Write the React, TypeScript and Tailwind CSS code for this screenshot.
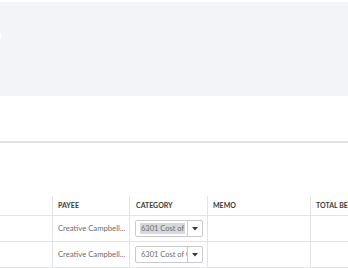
const rows = ["Creative Campbell...", "Creative Campbell..."];

function Arrow() {
  return (
    <svg width="6" height="4" viewBox="0 0 6 4">
      <path d="M0 0 H6 L3 3.5 Z" fill="#393a3d" />
    </svg>
  );
}

function CategorySelect({ selected }: { selected: boolean }) {
  return (
    <div className="flex h-[17px] w-[68px] items-stretch rounded-[2px] border border-[#c9cacd] bg-white">
      <div className="flex min-w-0 flex-1 items-center overflow-hidden pl-[4px]">
        <span
          className={
            selected
              ? "whitespace-nowrap bg-[#d7d8da] px-[1px] text-[7.5px] text-[#6b6c72]"
              : "whitespace-nowrap px-[1px] text-[7.5px] text-[#6b6c72]"
          }
        >
          {selected ? "6301 Cost of" : "6301 Cost of Goods Sold"}
        </span>
      </div>
      <div className="flex w-[15px] shrink-0 items-center justify-center border-l border-[#c9cacd]">
        <Arrow />
      </div>
    </div>
  );
}

export default function App() {
  return (
    <div
      className="h-[268px] w-[348px] overflow-hidden bg-white"
      style={{ fontFamily: "Lato, 'Open Sans', sans-serif" }}
    >
      <div className="mt-[2px] h-[94px] bg-[#f3f4f8] pt-[31px]">
        <div className="h-[5px] w-[1px] bg-white" />
      </div>
      <div className="h-[47px] border-b-2 border-[#e0e1e3]" />

      <div className="mt-[53px] grid grid-cols-[52px_77px_78px_103px_1fr]">
        <div className="h-[20px] border-b border-[#e3e4e6]" />
        <div className="flex h-[20px] items-center border-b border-l border-[#e3e4e6] pl-[5px] text-[7px] font-bold text-[#393a3d]">
          PAYEE
        </div>
        <div className="flex h-[20px] items-center border-b border-l border-[#e3e4e6] pl-[6px] text-[7px] font-bold text-[#393a3d]">
          CATEGORY
        </div>
        <div className="flex h-[20px] items-center border-b border-l border-[#e3e4e6] pl-[5px] text-[7px] font-bold text-[#393a3d]">
          MEMO
        </div>
        <div className="flex h-[20px] items-center overflow-hidden whitespace-nowrap border-b border-l border-[#e3e4e6] pl-[5px] text-[7px] font-bold text-[#393a3d]">
          TOTAL BEFORE SALES TAX
        </div>

        {rows.map((payee, i) => (
          <div key={i} className="contents">
            <div className="h-[26px] border-b border-[#e3e4e6]" />
            <div className="flex h-[26px] items-center whitespace-nowrap border-b border-l border-[#e3e4e6] pl-[5px] text-[7.7px] text-[#6b6c72]">
              {payee}
            </div>
            <div className="flex h-[26px] items-center border-b border-l border-[#e3e4e6] pl-[5px]">
              <CategorySelect selected={i === 0} />
            </div>
            <div className="h-[26px] border-b border-l border-[#e3e4e6]" />
            <div className="h-[26px] border-b border-l border-[#e3e4e6]" />
          </div>
        ))}
      </div>
    </div>
  );
}
